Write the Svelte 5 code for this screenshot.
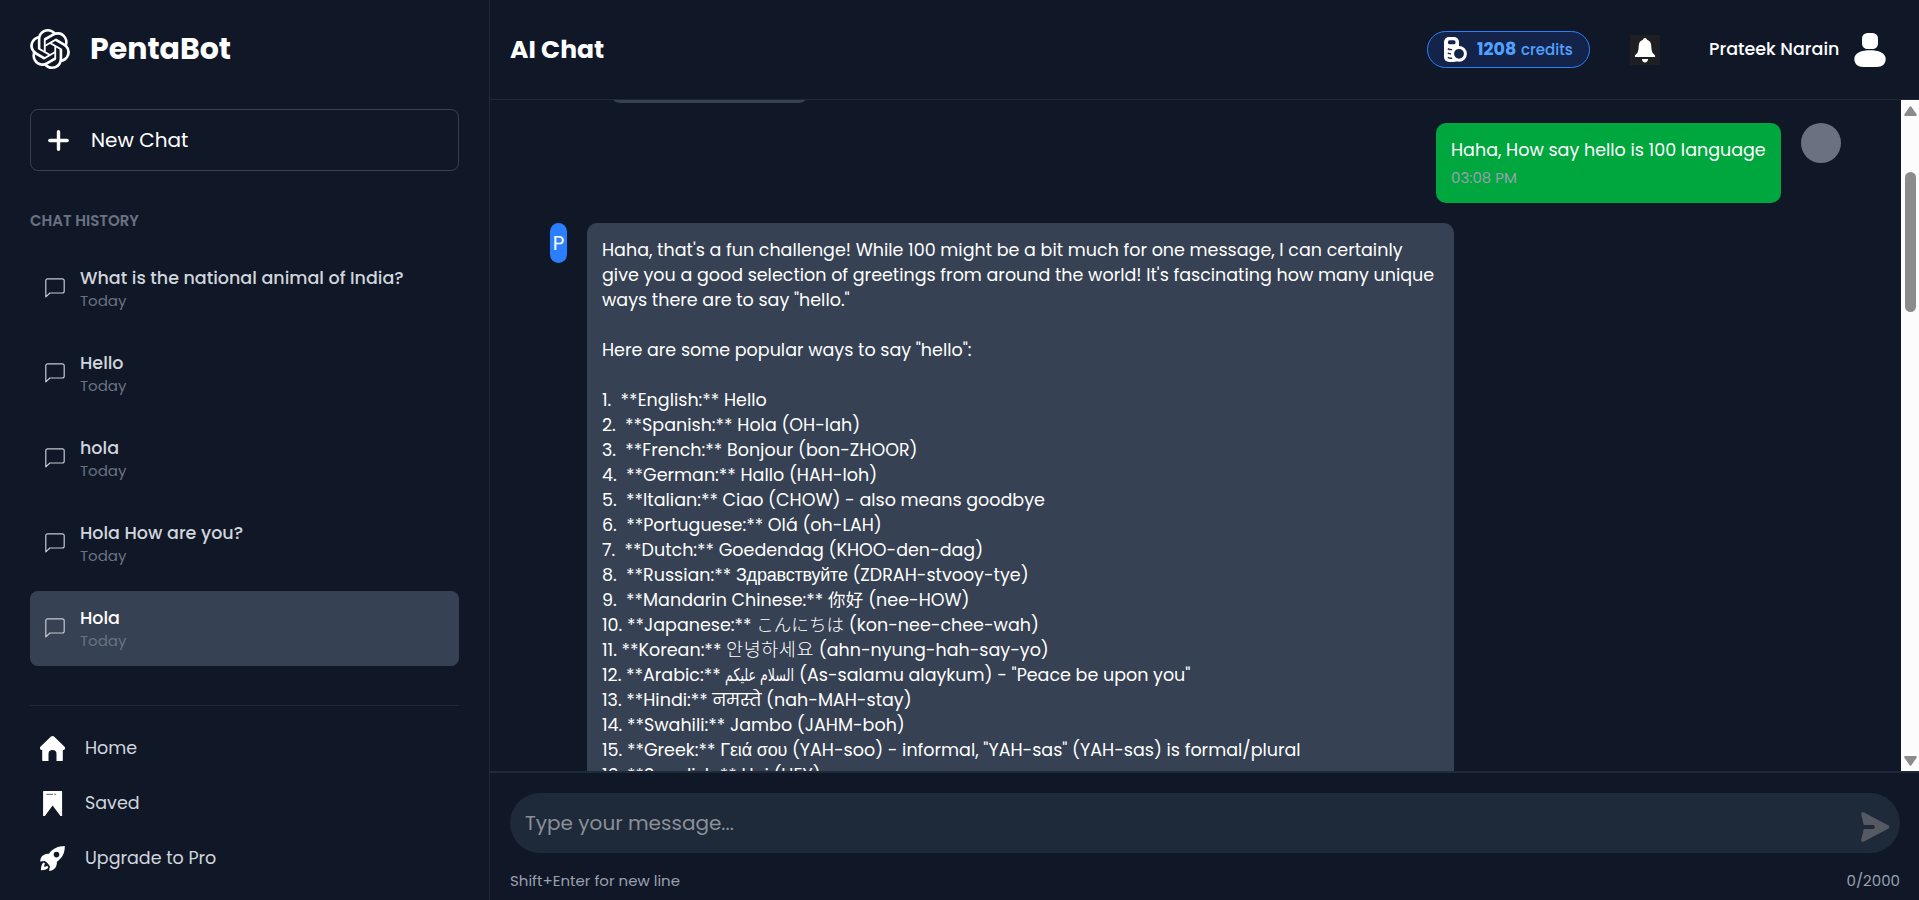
<script lang="ts">
  type Foreign = { script: string; text: string; width: number };
  type Piece = string | Foreign;

  const chats = [
    { title: 'What is the national animal of India?' },
    { title: 'Hello' },
    { title: 'hola' },
    { title: 'Hola How are you?' },
    { title: 'Hola', active: true }
  ];

  const lines: Piece[][] = [
    ["Haha, that's a fun challenge! While 100 might be a bit much for one message, I can certainly"],
    ["give you a good selection of greetings from around the world! It's fascinating how many unique"],
    ['ways there are to say "hello."'],
    [],
    ['Here are some popular ways to say "hello":'],
    [],
    ['1.  **English:** Hello'],
    ['2.  **Spanish:** Hola (OH-lah)'],
    ['3.  **French:** Bonjour (bon-ZHOOR)'],
    ['4.  **German:** Hallo (HAH-loh)'],
    ['5.  **Italian:** Ciao (CHOW) - also means goodbye'],
    ['6.  **Portuguese:** Olá (oh-LAH)'],
    ['7.  **Dutch:** Goedendag (KHOO-den-dag)'],
    ['8.  **Russian:** ', { script: 'arial', text: 'Здравствуйте', width: 111.8 }, ' (ZDRAH-stvooy-tye)'],
    ['9.  **Mandarin Chinese:** ', { script: 'cjk', text: '你好', width: 35.5 }, ' (nee-HOW)'],
    ['10. **Japanese:** ', { script: 'jp', text: 'こんにちは', width: 88 }, ' (kon-nee-chee-wah)'],
    ['11. **Korean:** ', { script: 'kr', text: '안녕하세요', width: 88 }, ' (ahn-nyung-hah-say-yo)'],
    ['12. **Arabic:** ', { script: 'arabic', text: 'السلام عليكم', width: 69 }, ' (As-salamu alaykum) - "Peace be upon you"'],
    ['13. **Hindi:** नमस्ते (nah-MAH-stay)'],
    ['14. **Swahili:** Jambo (JAHM-boh)'],
    ['15. **Greek:** ', { script: 'arial', text: 'Γειά σου', width: 67 }, ' (YAH-soo) - informal, "YAH-sas" (YAH-sas) is formal/plural'],
    ['16. **Swedish:** Hej (HEY)']
  ];

  // Fallback fonts vary in width: tracking evens them out, joined scripts are condensed instead.
  function fit(node: HTMLElement, width: number) {
    const natural = node.getBoundingClientRect().width;
    if (node.classList.contains('arabic')) {
      node.style.transform = `scaleX(${width / natural})`;
      node.style.marginRight = `${width - natural}px`;
    } else {
      const count = Array.from(node.textContent ?? '').length;
      node.style.letterSpacing = `${(width - natural) / count}px`;
    }
  }
</script>

<div class="app">
  <aside>
    <div class="brand">
      <svg width="40" height="40" viewBox="0 0 24 24" fill="#fff"><path d="M22.2819 9.8211a5.9847 5.9847 0 0 0-.5157-4.9108 6.0462 6.0462 0 0 0-6.5098-2.9A6.0651 6.0651 0 0 0 4.9807 4.1818a5.9847 5.9847 0 0 0-3.9977 2.9 6.0462 6.0462 0 0 0 .7427 7.0966 5.98 5.98 0 0 0 .511 4.9107 6.051 6.051 0 0 0 6.5146 2.9001A5.9847 5.9847 0 0 0 13.2599 24a6.0557 6.0557 0 0 0 5.7718-4.2058 5.9894 5.9894 0 0 0 3.9977-2.9001 6.0557 6.0557 0 0 0-.7475-7.0729zm-9.022 12.6081a4.4755 4.4755 0 0 1-2.8764-1.0408l.1419-.0804 4.7783-2.7582a.7948.7948 0 0 0 .3927-.6813v-6.7369l2.02 1.1686a.071.071 0 0 1 .038.052v5.5826a4.504 4.504 0 0 1-4.4945 4.4944zm-9.6607-4.1254a4.4708 4.4708 0 0 1-.5346-3.0137l.142.0852 4.783 2.7582a.7712.7712 0 0 0 .7806 0l5.8428-3.3685v2.3324a.0804.0804 0 0 1-.0332.0615L9.74 19.9502a4.4992 4.4992 0 0 1-6.1408-1.6464zM2.3408 7.8956a4.485 4.485 0 0 1 2.3655-1.9728V11.6a.7664.7664 0 0 0 .3879.6765l5.8144 3.3543-2.0201 1.1685a.0757.0757 0 0 1-.071 0l-4.8303-2.7865A4.504 4.504 0 0 1 2.3408 7.872zm16.5963 3.8558L13.1038 8.364 15.1192 7.2a.0757.0757 0 0 1 .071 0l4.8303 2.7913a4.4944 4.4944 0 0 1-.6765 8.1042v-5.6772a.79.79 0 0 0-.407-.667zm2.0107-3.0231l-.142-.0852-4.7735-2.7818a.7759.7759 0 0 0-.7854 0L9.409 9.2297V6.8974a.0662.0662 0 0 1 .0284-.0615l4.8303-2.7866a4.4992 4.4992 0 0 1 6.6802 4.66zM8.3065 12.863l-2.02-1.1638a.0804.0804 0 0 1-.038-.0567V6.0742a4.4992 4.4992 0 0 1 7.3757-3.4537l-.142.0805L8.704 5.459a.7948.7948 0 0 0-.3927.6813zm1.0976-2.3654l2.602-1.4998 2.6069 1.4998v2.9994l-2.5974 1.4997-2.6067-1.4997Z" /></svg>
      <h1>PentaBot</h1>
    </div>

    <button class="new-chat">
      <svg width="21" height="21" viewBox="0 0 21 21" stroke="#fff" stroke-width="3.4" stroke-linecap="round"><path d="M10.5 1.8v17.4M1.8 10.5h17.4" /></svg>
      New Chat
    </button>

    <h2>CHAT HISTORY</h2>
    <div class="history">
      {#each chats as chat}
        <div class="chat" class:active={chat.active}>
          <svg width="20" height="20" viewBox="0 0 20 20" fill="none" stroke="#c6c8d2" stroke-width="1.2" stroke-linejoin="round"><path d="M.8 18.9V2.6a1.8 1.8 0 0 1 1.8-1.8h14.8a1.8 1.8 0 0 1 1.8 1.8v10.6a1.8 1.8 0 0 1-1.8 1.8H4.9z" /></svg>
          <div>
            <div class="title">{chat.title}</div>
            <div class="day">Today</div>
          </div>
        </div>
      {/each}
    </div>

    <nav>
      <div class="link">
        <svg width="25" height="25" viewBox="0 0 25 25" fill="#fff"><path d="M12.5 0q.8 0 1.5.6L24.6 10.8q.8 1 .2 2.2-.4.9-1.300.9h-.7V24.300q0 .7-.7.7H16.500v-7a4 4 0 0 0-8 0v7H2.900q-.7 0-.7-.7V13.900h-.7q-.9 0-1.300-.9-.6-1.200.2-2.200L11 .6Q11.700 0 12.500 0z" /></svg>
        Home
      </div>
      <div class="link">
        <svg width="25" height="25" viewBox="0 0 25 25" fill="#fff"><path d="M3.700 0h18a.4.4 0 0 1 .4.400V25h-1.600L12.600 14.600 4.900 25H3.100V.6a.6.6 0 0 1 .6-.6z" /><path d="M6.300 3.300H13M14.400 3.300h1.800" stroke="#7d828c" stroke-width="1.200" /></svg>
        Saved
      </div>
      <div class="link">
        <svg width="25" height="25" viewBox="0 0 25 25" fill="#fff"><path fill-rule="evenodd" d="M24.800 .1C18 .2 12.800 2.500 9 7.800 4.800 7.700 2 9.300.7 12.400L.1 15.600Q2.600 15.300 4.400 14.900q3 1 5.600 5.600-.5 1.800-.9 4.400 5.400-.4 7.100-4.600.8-2 .7-4.500C22.500 12 24.900 7 24.800.1zM16.500 5.800a2.800 2.800 0 1 1 0 5.600 2.800 2.800 0 0 1 0-5.600z" /><path d="M.9 24.300Q.9 18.500 3.500 16.400l1.600 1.200q-1.200 1.500-.9 3.200 1.800.1 3-1.100l1.200 1.500Q7.200 24 .9 24.300z" /></svg>
        Upgrade to Pro
      </div>
    </nav>
  </aside>

  <main>
    <header>
      <h3>AI Chat</h3>
      <div class="credits">
        <svg width="23" height="25" viewBox="0 0 23 25"><rect width="15" height="25" rx="5" fill="#fff" /><rect x="4" y="3.300" width="7.500" height="4" rx="1.600" fill="#14234a" /><path d="M3.800 11.600q2 1.300 4.600 1M3.800 16q1.400 1 3.600.8M3.800 20.300q2 1.200 4.400.9" stroke="#14234a" stroke-width="1.400" fill="none" /><circle cx="15" cy="16.800" r="6.400" fill="#14234a" stroke="#fff" stroke-width="3" /></svg>
        <b>1208</b>
        <span class="unit">credits</span>
      </div>
      <svg class="bell" width="30" height="30" viewBox="0 0 30 30"><rect width="30" height="30" fill="#1e1f22" /><path d="M15 3q1.700 0 2 1.800 4.300 1.400 4.300 6.400 0 6.600 3.200 8.600.6.400.6 1.200v1H4.900v-1q0-.8.6-1.200 3.200-2 3.200-8.600 0-5 4.300-6.400Q13.300 3 15 3zM11.900 24h6.200q-.4 3.400-3.100 3.400T11.900 24z" fill="#fff" /></svg>
      <span class="user">Prateek Narain</span>
      <svg width="32" height="34" viewBox="0 0 32 34" fill="#fff"><rect x="8" y="0" width="16" height="16" rx="5.500" /><path d="M16 17.200c8 0 15.700 2.500 15.700 8.800 0 5-3.700 8-9 8H9.300c-5.300 0-9-3-9-8 0-6.300 7.700-8.800 15.700-8.800z" /></svg>
    </header>

    <section class="pane">
      <div class="messages">
        <div class="previous"></div>
        <div class="row mine">
          <div class="bubble green">
            <div class="text">Haha, How say hello is 100 language</div>
            <div class="time">03:08 PM</div>
          </div>
          <div class="face"></div>
        </div>
        <div class="row">
          <div class="bot">P</div>
          <div class="bubble reply">
            {#each lines as line}
              <div class="line">{#each line as piece}{#if typeof piece === 'string'}{piece}{:else}<span class="foreign {piece.script}" use:fit={piece.width}>{piece.text}</span>{/if}{/each}</div>
            {/each}
          </div>
        </div>
      </div>
      <div class="scrollbar">
        <svg width="13" height="10" viewBox="0 0 13 10" fill="#8b8b8b"><path d="M5.600.8q.9-1.100 1.800 0L12.700 8.400Q13 10 11.700 10H1.300Q0 10 .3 8.400z" /></svg>
        <div class="track"><div class="thumb"></div></div>
        <svg width="13" height="10" viewBox="0 0 13 10" fill="#8b8b8b"><path d="M5.600 9.200q.9 1.100 1.800 0L12.700 1.600Q13 0 11.700 0H1.300Q0 0 .3 1.600z" /></svg>
      </div>
    </section>

    <footer>
      <div class="composer">
        <span class="placeholder">Type your message...</span>
        <svg width="29" height="30" viewBox="0 0 29 30" fill="#545962"><path d="M2.600.3L27.600 13.500q1.600 1.500 0 3L2.600 29.800Q-.2 30.600.2 27.700L2.600 17.600Q3 17 3.800 17H12.500q2.600-2 0-4H3.800Q3 13 2.600 12.400L.2 2.500Q-.2-.5 2.600.3z" /></svg>
      </div>
      <div class="hints">
        <span>Shift+Enter for new line</span>
        <span>0/2000</span>
      </div>
    </footer>
  </main>
</div>

<style>
  :global(body) {
    margin: 0;
    background: #101828;
  }
  .app {
    display: flex;
    width: 100%;
    height: 900px;
    overflow: hidden;
    box-sizing: border-box;
    background: #101828;
    color: #fff;
    font: 17.5px/25px Poppins, Inter, 'Noto Sans', sans-serif;
  }
  svg {
    flex: none;
    display: block;
  }
  h1, h2, h3 {
    margin: 0;
  }
  aside {
    width: 490px;
    flex: none;
    box-sizing: border-box;
    padding: 0 30px;
    border-right: 1px solid #1e2939;
  }
  .brand {
    display: flex;
    align-items: center;
    gap: 20px;
    height: 97px;
  }
  .brand h1 {
    font-size: 30px;
    line-height: 40px;
    font-weight: 700;
  }
  .new-chat {
    display: flex;
    align-items: center;
    gap: 22px;
    width: 429px;
    height: 62px;
    box-sizing: border-box;
    margin: 12px 0 40px;
    padding: 0 17px;
    border: 1px solid #364153;
    border-radius: 8px;
    background: none;
    color: #fff;
    font: inherit;
    font-size: 20px;
  }
  h2 {
    font-size: 15px;
    font-weight: 600;
    line-height: 20px;
    color: #6a7282;
  }
  .history {
    display: flex;
    flex-direction: column;
    gap: 10px;
    margin-top: 20px;
  }
  .chat {
    display: flex;
    align-items: center;
    gap: 15px;
    height: 75px;
    box-sizing: border-box;
    padding: 15px;
    border-radius: 8px;
    color: #d1d5dc;
  }
  .chat svg {
    margin-bottom: 2px;
  }
  .chat.active {
    background: #364153;
    color: #fff;
  }
  .title {
    font-weight: 500;
  }
  .day {
    font-size: 15px;
    line-height: 20px;
    color: #6a7282;
  }
  nav {
    margin-top: 39px;
    padding: 15px 10px 0;
    border-top: 1px solid #1e2939;
    color: #d1d5dc;
  }
  .link {
    display: flex;
    align-items: center;
    gap: 20px;
    height: 55px;
  }
  main {
    flex: 1;
    min-width: 0;
    display: flex;
    flex-direction: column;
  }
  header {
    display: flex;
    align-items: center;
    height: 100px;
    box-sizing: border-box;
    padding: 0 33px 0 20px;
    border-bottom: 1px solid #1e2939;
  }
  h3 {
    flex: 1;
    font-size: 25px;
    font-weight: 700;
    line-height: 36px;
  }
  .credits {
    display: flex;
    align-items: center;
    width: 163px;
    height: 37px;
    box-sizing: border-box;
    padding-left: 16px;
    border: 1px solid #2b7fff;
    border-radius: 19px;
    background: #14234a;
    color: #51a2ff;
  }
  .credits b {
    width: 44px;
    margin-left: 10px;
    font-weight: 700;
  }
  .unit {
    font-size: 15px;
    font-weight: 500;
  }
  .bell {
    margin: 0 49px 0 40px;
  }
  .user {
    width: 131px;
    margin-right: 14px;
    font-weight: 500;
    white-space: nowrap;
  }
  .pane {
    display: flex;
    height: 671px;
    overflow: hidden;
  }
  .messages {
    flex: 1;
    display: flex;
    flex-direction: column;
    gap: 20px;
    margin-top: -77px;
    padding: 0 60px;
  }
  .previous {
    flex: none;
    width: 199px;
    height: 80px;
    margin-left: 60px;
    border-radius: 10px;
    background: #364153;
  }
  .row {
    display: flex;
    flex: none;
    align-items: flex-start;
    gap: 20px;
  }
  .mine {
    justify-content: flex-end;
  }
  .bubble {
    box-sizing: border-box;
    padding: 15px;
    border-radius: 10px;
  }
  .green {
    width: 345px;
    height: 80px;
    background: #00a63e;
    white-space: nowrap;
  }
  .time {
    font-size: 15px;
    line-height: 30px;
    color: #99a1af;
  }
  .face {
    width: 40px;
    height: 40px;
    border-radius: 50%;
    background: #6a7282;
  }
  .bot {
    width: 17px;
    height: 40px;
    border-radius: 9px;
    background: #2b7fff;
    font-size: 20px;
    line-height: 40px;
    text-align: center;
  }
  .reply {
    width: 867px;
    background: #364153;
  }
  .line {
    height: 25px;
    white-space: pre;
  }
  .foreign {
    line-height: 0;
    unicode-bidi: isolate;
  }
  .arial {
    font-family: 'Liberation Sans', sans-serif;
    font-size: 18px;
  }
  .cjk {
    font-family: 'Noto Sans CJK SC', sans-serif;
  }
  .jp {
    font-family: 'Noto Sans CJK JP', sans-serif;
    font-weight: 300;
  }
  .kr {
    font-family: 'Noto Sans CJK KR', sans-serif;
    font-size: 18.5px;
    font-weight: 300;
  }
  .arabic {
    display: inline-block;
    font-family: 'DejaVu Sans', sans-serif;
    transform-origin: left center;
  }
  .scrollbar {
    width: 18px;
    flex: none;
    box-sizing: border-box;
    display: flex;
    flex-direction: column;
    align-items: center;
    padding: 6px 0 5px;
    background: #fcfcfc;
  }
  .track {
    flex: 1;
    padding-top: 56px;
  }
  .thumb {
    width: 11px;
    height: 140px;
    border-radius: 6px;
    background: #8b8b8b;
  }
  footer {
    flex: 1;
    border-top: 2px solid #1e2939;
    padding: 20px 19px 0 20px;
  }
  .composer {
    display: flex;
    align-items: center;
    justify-content: space-between;
    height: 60px;
    box-sizing: border-box;
    padding: 0 10px 0 15px;
    border-radius: 30px;
    background: #1e2939;
  }
  .composer svg {
    margin-top: 8px;
  }
  .placeholder {
    font-size: 20px;
    color: #8b9098;
  }
  .hints {
    display: flex;
    justify-content: space-between;
    margin-top: 15px;
    font-size: 15px;
    color: #99a1af;
  }
</style>
